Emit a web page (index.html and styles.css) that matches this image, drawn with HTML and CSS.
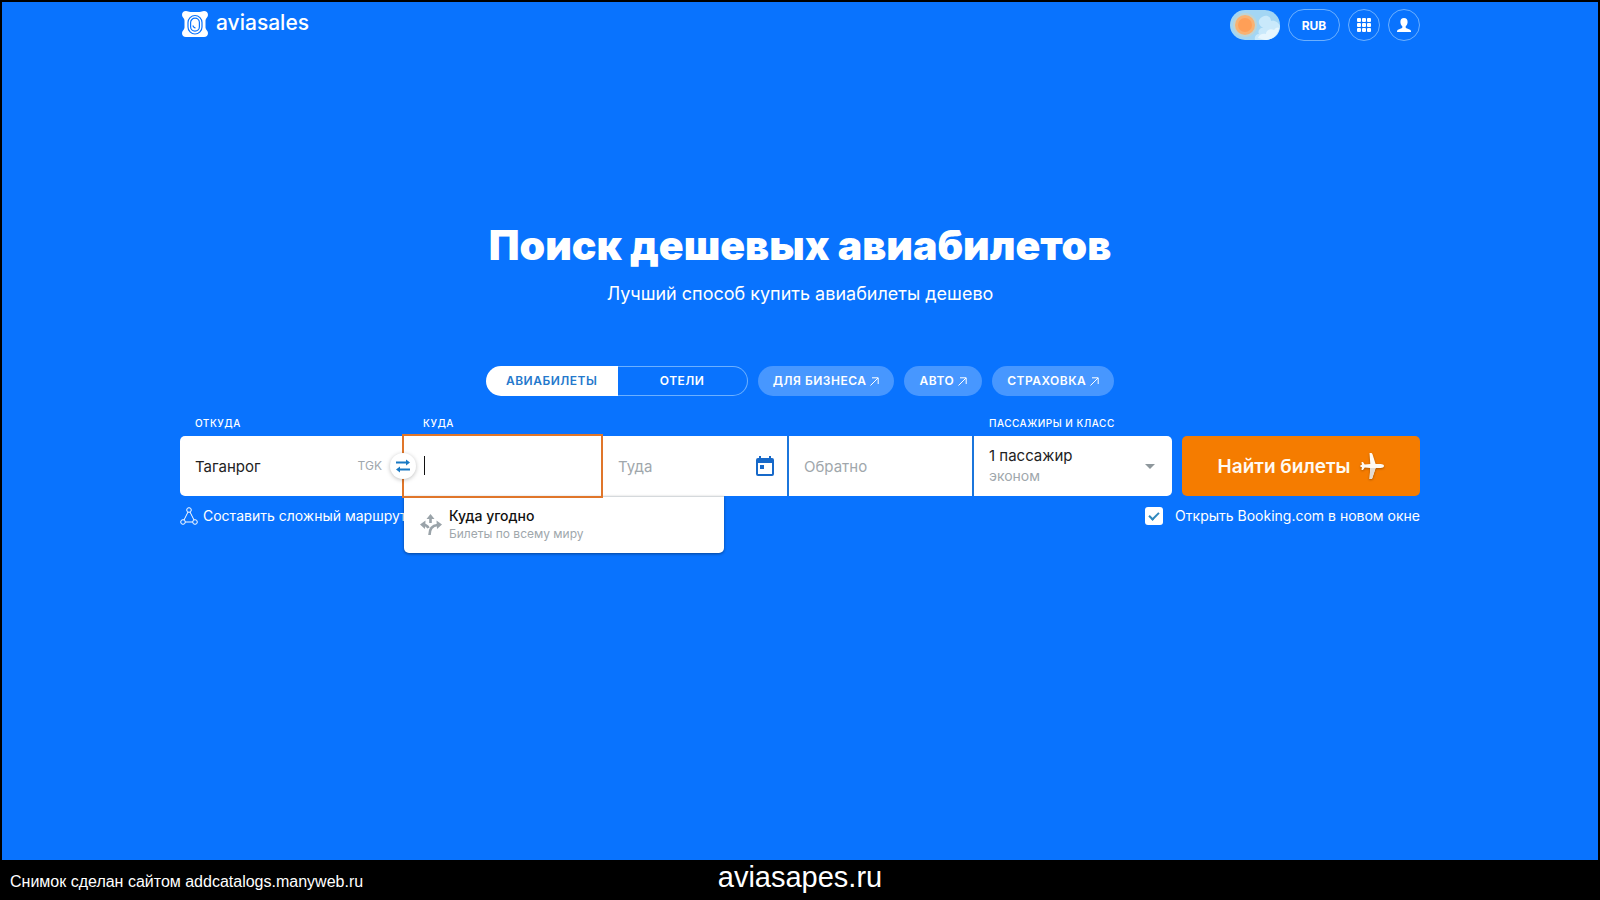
FILE: index.html
```html
<!DOCTYPE html>
<html lang="ru">
<head>
<meta charset="utf-8">
<title>Поиск дешевых авиабилетов</title>
<link rel="stylesheet" href="styles.css">
</head>
<body>
<div class="page">
  <header class="header">
    <a class="logo" href="#">
      <svg class="logo-mark" viewBox="0 0 26 26" aria-hidden="true">
        <path fill="#fff" d="M4 0c2 0 2.500 1 4.500 1h9c2 0 2.500-1 4.500-1 2.500 0 4 1.500 4 4 0 2.500-2.500 3-2.500 5.500v7c0 2.500 2.500 3 2.500 5.500 0 2.500-1.500 4-4 4H4c-2.500 0-4-1.500-4-4 0-2.500 2.500-3 2.500-5.500v-7C2.500 7 0 6.500 0 4c0-2.500 1.500-4 4-4z"/>
        <rect x="6" y="4.500" width="14" height="18.500" rx="7" fill="none" stroke="#0973fe" stroke-width="1.200"/>
        <rect x="8.600" y="7.200" width="8.800" height="13" rx="4.400" fill="none" stroke="#0973fe" stroke-width="1.200"/>
        <path d="M11 14.500c.2 1.600 1 2.300 2.500 2.300" fill="none" stroke="#0973fe" stroke-width="1.200"/>
      </svg>
      <span>aviasales</span>
    </a>
    <div class="tools">
      <button class="theme" type="button" aria-label="Тема">
        <svg viewBox="0 0 50 30" aria-hidden="true">
          <rect width="50" height="30" rx="15" fill="#a3d6f4"/>
          <path d="M25 30c-1-3 1-6 4-6-2-4 2-7 5-6-6-2-7-8-2-11 5-3 9 0 9 4 4-1 8 2 9 5 0 9-7 14-15 14z" fill="#c9e9fb"/>
          <path d="M28 28c1-4 5-5 8-4 0-4 5-6 8-4 2-3 4-3 5-2-1 7-7 12-14 12z" fill="#e6f6fe"/>
          <circle cx="15" cy="15" r="12" fill="#c9d3c8" opacity=".7"/>
          <circle cx="15" cy="15" r="10" fill="#f9b273"/>
          <circle cx="15" cy="15" r="7" fill="#ff9f57"/>
        </svg>
      </button>
      <button class="round currency" type="button">RUB</button>
      <button class="round" type="button" aria-label="Сервисы">
        <svg width="14" height="14" viewBox="0 0 14 14" fill="#fff" aria-hidden="true">
          <rect width="4" height="4" rx="1"/><rect x="5" width="4" height="4" rx="1"/><rect x="10" width="4" height="4" rx="1"/>
          <rect y="5" width="4" height="4" rx="1"/><rect x="5" y="5" width="4" height="4" rx="1"/><rect x="10" y="5" width="4" height="4" rx="1"/>
          <rect y="10" width="4" height="4" rx="1"/><rect x="5" y="10" width="4" height="4" rx="1"/><rect x="10" y="10" width="4" height="4" rx="1"/>
        </svg>
      </button>
      <button class="round" type="button" aria-label="Профиль">
        <svg width="14" height="14" viewBox="0 0 14 14" fill="#fff" aria-hidden="true">
          <path d="M7 0c2.400 0 3.600 1.600 3.600 3.900 0 1.900-.8 3.500-1.900 4.300v1.200c0 .5.300.7.800.9l3 1.100c1 .4 1.500 1 1.500 2.600H0c0-1.600.5-2.200 1.500-2.600l3-1.100c.5-.2.8-.4.8-.9V8.200C4.200 7.400 3.400 5.800 3.400 3.900 3.400 1.600 4.600 0 7 0z"/>
        </svg>
      </button>
    </div>
  </header>

  <main class="main">
    <h1 class="title">Поиск дешевых авиабилетов</h1>
    <p class="subtitle">Лучший способ купить авиабилеты дешево</p>

    <nav class="tabs">
      <div class="switch">
        <button class="tab tab-active" type="button">АВИАБИЛЕТЫ</button>
        <button class="tab" type="button">ОТЕЛИ</button>
      </div>
      <a class="pill" href="#">ДЛЯ БИЗНЕСА <svg class="arrow" viewBox="0 0 9 9"><path d="M.5 8.500l7.500-7.500M2 .8h6.200V7"/></svg></a>
      <a class="pill" href="#">АВТО <svg class="arrow" viewBox="0 0 9 9"><path d="M.5 8.500l7.500-7.500M2 .8h6.200V7"/></svg></a>
      <a class="pill" href="#">СТРАХОВКА <svg class="arrow" viewBox="0 0 9 9"><path d="M.5 8.500l7.500-7.500M2 .8h6.200V7"/></svg></a>
    </nav>

    <form class="search">
      <div class="fields">
        <div class="field">
          <label class="label" for="from">ОТКУДА</label>
          <div class="box box-first">
            <input class="input" id="from" type="text" value="Таганрог">
            <span class="code">TGK</span>
          </div>
        </div>
        <div class="field">
          <label class="label label-to" for="to">КУДА</label>
          <div class="box box-to">
            <input class="input" id="to" type="text">
            <span class="caret"></span>
            <button class="swap" type="button" aria-label="Поменять местами">
              <svg width="14" height="14" viewBox="0 0 14 14" aria-hidden="true">
                <path d="M0 3.500h11M14 10.500H3" stroke="#1979c4" stroke-width="2"/>
                <path d="M10 .5l4 3-4 3zM4 7.500l-4 3 4 3z" fill="#1979c4"/>
              </svg>
            </button>
            <button class="suggest" type="button">
              <svg width="22" height="22" viewBox="0 0 22 22" aria-hidden="true">
                <path d="M10.500 4v5M9.500 21c0-6 2.500-9.500 8-10M8.500 14c-1-2-2.500-3-5-3.200" fill="none" stroke="#9aa3a9" stroke-width="2.600"/>
                <path d="M10.500 0l4 5h-8zM22 10.500l-5 4.500-.5-8.500zM0 10.500l5.500-4L5 15z" fill="#9aa3a9"/>
              </svg>
              <span class="suggest-text">
                <span class="suggest-name">Куда угодно</span>
                <span class="suggest-note">Билеты по всему миру</span>
              </span>
            </button>
          </div>
        </div>
        <div class="field">
          <div class="box box-date">
            <input class="input" type="text" placeholder="Туда" aria-label="Туда">
            <svg width="18" height="20" viewBox="0 0 18 20" aria-hidden="true">
              <path fill="#1769c9" fill-rule="evenodd" d="M3 0h2v2h8V0h2v2h1a2 2 0 0 1 2 2v14a2 2 0 0 1-2 2H2a2 2 0 0 1-2-2V4a2 2 0 0 1 2-2h1zM2 7v11h14V7zM4 9h4v4H4z"/>
            </svg>
          </div>
        </div>
        <div class="field">
          <div class="box box-split">
            <input class="input" type="text" placeholder="Обратно" aria-label="Обратно">
          </div>
        </div>
        <div class="field">
          <span class="label label-pax" id="pax-label">ПАССАЖИРЫ И КЛАСС</span>
          <button class="box box-split box-last" type="button" aria-labelledby="pax-label pax-value">
            <span class="pax" id="pax-value"><span class="pax-count">1 пассажир</span><span class="pax-class">эконом</span></span>
            <svg width="10" height="5" viewBox="0 0 10 5" aria-hidden="true"><path d="M0 0h10L5 5z" fill="#8e979c"/></svg>
          </button>
        </div>
      </div>
      <button class="submit" type="submit">
        <span>Найти билеты</span>
        <svg class="plane" viewBox="0 0 24 28" aria-hidden="true">
          <path fill="#fffaf2" d="M24 14c0 1.200-1.600 1.900-3.200 1.900h-5.200L12.500 25.500c-.3 1-.8 1.500-1.700 1.500H9.500l.8-11.100-5.600-.3L3 18H1.500l.4-3H.5v-2h1.400L1.500 10H3l1.700 2.400 5.600-.3L9.500 1h1.300c.9 0 1.400.4 1.700 1.300l3.100 9.800h5.200c1.600 0 3.200.7 3.200 1.900z"/>
          <path fill="#e3dcd3" d="M10.300 15.900h5.300l-3.100 9.600c-.3 1-.8 1.500-1.700 1.500H9.500z"/>
        </svg>
      </button>
    </form>

    <div class="extras">
      <a class="complex" href="#">
        <svg width="18" height="18" viewBox="0 0 18 18" fill="none" stroke="#fff" aria-hidden="true">
          <circle cx="9" cy="3" r="2.300"/><circle cx="3" cy="15" r="2.300"/><circle cx="15" cy="15" r="2.300"/>
          <path d="M8 5L4 13M10 5l4 8M5.300 15h7.400"/>
        </svg>
        <span>Составить сложный маршрут</span>
      </a>
      <label class="booking">
        <input class="check" type="checkbox" checked>
        <span>Открыть Booking.com в новом окне</span>
      </label>
    </div>
  </main>
</div>
<footer class="footer">
  <span class="credit">Снимок сделан сайтом addcatalogs.manyweb.ru</span>
  <span class="site">aviasapes.ru</span>
</footer>
</body>
</html>
```

FILE: styles.css
```css
* { box-sizing: border-box; }

body {
  margin: 0;
  min-height: 100vh;
  display: flex;
  flex-direction: column;
  background: #000;
  color: #fff;
  font-family: Inter, Roboto, sans-serif;
}

button, input { font: inherit; color: inherit; }
button { margin: 0; padding: 0; border: 0; background: none; cursor: pointer; }
a { color: inherit; text-decoration: none; }
svg { display: block; flex: none; }

.page {
  flex: 1;
  margin: 2px 2px 0;
  padding: 0 20px;
  background: #0973fe;
}

.header, .main {
  max-width: 1240px;
  margin: 0 auto;
}

.header {
  display: flex;
  justify-content: space-between;
  align-items: center;
  padding-top: 7px;
}

.logo {
  display: flex;
  align-items: center;
  gap: 8px;
  padding: 0 0 2px 2px;
  font-size: 21px;
  line-height: 26px;
  font-weight: 500;
}
.logo-mark { width: 26px; height: 26px; }
.logo span { margin-bottom: 2px; }

.tools { display: flex; align-items: center; gap: 8px; }
.theme { width: 50px; height: 30px; }
.round {
  display: flex;
  align-items: center;
  justify-content: center;
  width: 32px;
  height: 32px;
  border: 1px solid #6cb0ff;
  border-radius: 16px;
}
.currency { width: 52px; font-size: 12px; font-weight: 700; }

.title {
  margin: 178px 0 0;
  font-size: 41px;
  line-height: 52px;
  font-weight: 900;
  text-align: center;
}
.subtitle {
  margin: 9px 0 0;
  font-size: 18px;
  line-height: 28px;
  text-align: center;
}

.tabs {
  display: flex;
  justify-content: center;
  gap: 10px;
  margin-top: 58px;
  font-size: 12px;
  line-height: 30px;
  font-weight: 600;
  letter-spacing: 0.5px;
}
.switch { display: grid; grid-template-columns: 132px 130px; }
.tab {
  height: 30px;
  border: 1px solid #6cb0ff;
  border-left: 0;
  border-radius: 0 15px 15px 0;
  line-height: 28px;
  font-weight: 600;
  letter-spacing: inherit;
}
.tab-active {
  border: 0;
  border-radius: 15px 0 0 15px;
  background: #fff;
  color: #2478cc;
  line-height: 30px;
}
.pill {
  display: flex;
  align-items: center;
  gap: 4px;
  height: 30px;
  padding: 0 15px;
  border-radius: 15px;
  background: #4797ff;
}
.arrow { width: 9px; height: 9px; fill: none; stroke: #fff; }

.search {
  display: grid;
  grid-template-columns: 992fr 238fr;
  gap: 10px;
  align-items: end;
  margin-top: 18px;
}
.fields {
  display: grid;
  grid-template-columns: 224fr 197fr 186fr 185fr 200fr;
  align-items: end;
}
.field { min-width: 0; }
.label {
  display: block;
  padding-left: 15px;
  margin-bottom: 4px;
  font-size: 10px;
  line-height: 18px;
  font-weight: 500;
  letter-spacing: 0.5px;
}
.label-to { padding-left: 19px; }
.label-pax { padding-left: 17px; }

.box {
  position: relative;
  display: flex;
  align-items: center;
  width: 100%;
  height: 60px;
  padding: 0 15px;
  background: #fff;
  color: #222;
  font-size: 15px;
  line-height: 20px;
}
.box-first { padding-right: 22px; border-radius: 5px 0 0 5px; }
.box-to { padding: 0 19px; outline: 2px solid #e0762a; z-index: 2; }
.box-date { padding: 0 13px 0 17px; }
.box-split { border-left: 2px solid #1b76dc; }
.box-last { justify-content: space-between; border-radius: 0 5px 5px 0; text-align: left; padding-right: 17px; }

.input {
  flex: 1;
  min-width: 0;
  height: 40px;
  padding: 0;
  border: 0;
  outline: 0;
  background: none;
}
.input::placeholder { color: #a0a7ac; opacity: 1; }
.code { color: #a0a7ac; font-size: 12px; }

.caret {
  position: absolute;
  left: 20px;
  top: 20px;
  width: 1px;
  height: 19px;
  background: #111;
}
.swap {
  position: absolute;
  left: -14px;
  top: 17px;
  display: flex;
  align-items: center;
  justify-content: center;
  width: 26px;
  height: 26px;
  border-radius: 50%;
  background: #fff;
  box-shadow: 0 1px 4px rgba(0, 0, 0, 0.25);
}
.suggest {
  position: absolute;
  left: 0;
  top: 60px;
  z-index: -1;
  display: flex;
  align-items: center;
  gap: 7px;
  width: 320px;
  height: 57px;
  padding: 0 16px;
  border-top: 1px solid #d5d9dc;
  border-radius: 0 0 5px 5px;
  background: #fff;
  box-shadow: 0 1px 3px rgba(0, 0, 0, 0.4);
  text-align: left;
}
.suggest-text { display: flex; flex-direction: column; line-height: 18px; }
.suggest-name { color: #111; font-size: 14px; font-weight: 500; }
.suggest-note { color: #a0a7ac; font-size: 12px; }

.pax { display: flex; flex-direction: column; }
.pax-class { color: #a0a7ac; font-size: 14px; }

.submit {
  display: flex;
  align-items: center;
  justify-content: center;
  gap: 10px;
  height: 60px;
  border-radius: 5px;
  background: #f57c00;
  color: #fffaf2;
  font-size: 19px;
  font-weight: 600;
}
.plane { width: 24px; height: 28px; filter: drop-shadow(0 1px 1px rgba(0, 0, 0, 0.3)); }

.extras {
  display: flex;
  justify-content: space-between;
  margin-top: 10px;
  font-size: 14px;
  line-height: 20px;
}
.complex, .booking { display: flex; align-items: center; }
.complex { gap: 5px; }
.booking { gap: 12px; }
.check {
  appearance: none;
  display: grid;
  place-items: center;
  width: 18px;
  height: 18px;
  margin: 0;
  border-radius: 3px;
  background: #fff;
}
.check:checked::before {
  content: "";
  width: 8px;
  height: 4px;
  margin-bottom: 3px;
  border: solid #2f88bd;
  border-width: 0 0 2px 2px;
  transform: rotate(-45deg);
}

.footer {
  display: grid;
  grid-template-columns: 1fr auto 1fr;
  align-items: baseline;
  height: 40px;
  padding: 0 10px;
  font-family: "Liberation Sans", Arial, sans-serif;
  line-height: 34px;
}
.credit { font-size: 16px; }
.site { font-size: 29px; }
```
